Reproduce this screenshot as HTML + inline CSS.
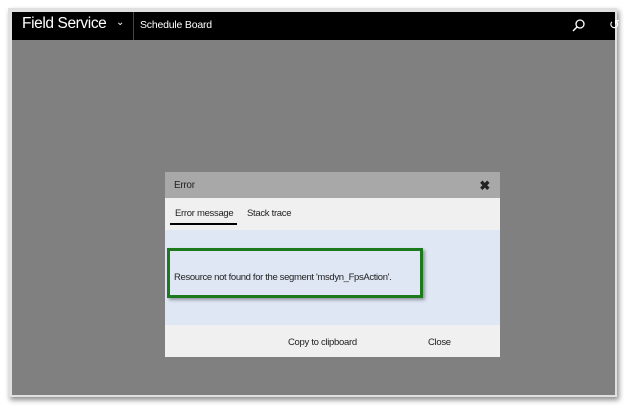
<!DOCTYPE html><html><head><style>
body{margin:0;width:628px;height:406px;background:#fff;position:relative;overflow:hidden;font-family:"Liberation Sans",sans-serif}
.frame{position:absolute;left:8px;top:8px;width:609px;height:389px;background:#e0e0e0;box-shadow:2px 3px 5px rgba(0,0,0,.45)}
.scr{position:absolute;left:12px;top:12px;width:603px;height:383px;background:#808080}
.bar{position:absolute;left:12px;top:12px;width:603px;height:28px;background:#000;color:#fff}
.dlg{position:absolute;left:165px;top:172px;width:335px;height:185px;background:#f0f0f0;font-size:9.5px;color:#222;letter-spacing:-0.3px}
</style></head><body>
<div class="frame"></div><div class="scr"></div>
<div class="bar">
<div style="position:absolute;left:10px;top:3px;font-size:15.5px;letter-spacing:-0.4px">Field Service</div>
<div style="position:absolute;left:104px;top:5px;font-size:10px">&#8964;</div>
<div style="position:absolute;left:121px;top:0;width:1px;height:28px;background:#444"></div>
<div style="position:absolute;left:128px;top:7px;font-size:10.5px;letter-spacing:-0.2px">Schedule Board</div>
<svg style="position:absolute;left:560px;top:6px" width="14" height="14"><circle cx="8" cy="6" r="4" fill="none" stroke="#fff" stroke-width="1.3"/><line x1="5" y1="9" x2="1" y2="13" stroke="#fff" stroke-width="1.4"/></svg>
<div style="position:absolute;left:597px;top:5px;font-size:13px">&#8634;</div>
</div>
<div class="dlg">
<div style="height:26px;background:#a8a8a8;position:relative"><span style="position:absolute;left:9px;top:8px;font-size:10px">Error</span><span style="position:absolute;right:10px;top:6px;font-size:13px;font-weight:bold">&#10006;</span></div>
<div style="height:32px;position:relative"><span style="position:absolute;left:10px;top:10px">Error message</span><div style="position:absolute;left:5px;top:25px;width:67px;height:2px;background:#000"></div><span style="position:absolute;left:82px;top:10px">Stack trace</span></div>
<div style="height:95px;background:#dfe7f4;position:relative">
<div style="position:absolute;left:2px;top:18px;width:250px;height:44px;border:3px solid #1c7a1c;box-shadow:2px 2px 3px rgba(0,0,0,.35)"></div>
<span style="position:absolute;left:9px;top:42px;letter-spacing:-0.35px">Resource not found for the segment 'msdyn_FpsAction'.</span></div>
<div style="position:relative;height:32px"><span style="position:absolute;left:123px;top:12px">Copy to clipboard</span><span style="position:absolute;left:263px;top:12px">Close</span></div>
</div>
</body></html>
